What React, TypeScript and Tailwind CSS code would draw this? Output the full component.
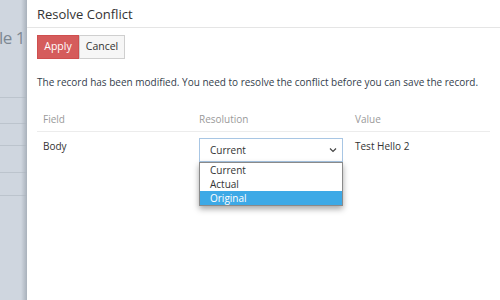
const options = ['Current', 'Actual', 'Original'];

function Backdrop() {
  return (
    <div className="relative w-[27px] shrink-0 overflow-hidden bg-[#cfd6df] font-['Open_Sans',sans-serif]">
      <div className="flex h-[97px] justify-end pt-[24px] pr-[2px]">
        <span className="whitespace-nowrap text-[17px] leading-[28px] tracking-[-0.5px] text-[#7d8893]">le 1</span>
      </div>
      <div className="h-[26px] border-t border-[#bcc4cd]"></div>
      <div className="h-[22px] border-t border-[#bcc4cd]"></div>
      <div className="h-[27px] border-t border-[#bcc4cd]"></div>
      <div className="h-[23px] border-t border-[#bcc4cd]"></div>
      <div className="border-t border-[#bcc4cd]"></div>
      <div className="absolute inset-y-0 right-0 w-[6px] bg-gradient-to-r from-transparent to-[#a9b1bb]"></div>
    </div>
  );
}

export default function App() {
  return (
    <div className="flex h-[300px] w-[500px] overflow-hidden bg-white">
      <Backdrop />
      <div className="flex-1 bg-white font-['Open_Sans',sans-serif] text-[#333]">
        <div className="h-[28px] border-b border-[#e5e5e5] pl-[10px] pt-[4px]">
          <h1 className="text-[13px] leading-[20px] text-[#333]">Resolve Conflict</h1>
        </div>
        <div className="px-[10px]">
          <div className="mt-[7px] flex">
            <button className="h-[24px] w-[42px] border border-[#cf4f4f] bg-[#d55c5c] text-[10.5px] text-white">Apply</button>
            <button className="h-[24px] w-[46px] border border-[#cfcfcf] bg-[#f6f6f6] text-[10.5px] text-[#333]">Cancel</button>
          </div>
          <p className="mt-[16px] whitespace-nowrap text-[10px] leading-[14px] text-[#34404c]">
            The record has been modified. You need to resolve the conflict before you can save the record.
          </p>
          <div className="mt-[23px] grid grid-cols-[156px_156px_1fr] border-b border-[#ececec] pb-[5px] pl-[6px] text-[10px] leading-[14px] text-[#9a9a9a]">
            <span>Field</span>
            <span>Resolution</span>
            <span>Value</span>
          </div>
          <div className="grid grid-cols-[156px_156px_1fr] pl-[6px] pt-[6px] text-[10px] leading-[14px]">
            <span className="pt-[1px] text-[#333]">Body</span>
            <div className="relative w-[144px]">
              <div className="flex h-[24px] items-center justify-between border border-[#a8c6e4] bg-white pl-[10px] pr-[5px] text-[#333]">
                <span>Current</span>
                <svg width="8" height="6" viewBox="0 0 8 6" className="text-[#444]">
                  <path d="M1 1.5 L4 4.5 L7 1.5" fill="none" stroke="currentColor" strokeWidth="1.2" />
                </svg>
              </div>
              <ul className="absolute left-0 right-0 top-[24px] border border-[#8a8a8a] bg-white shadow-[0_3px_6px_rgba(0,0,0,0.35)]">
                {options.map((o) => (
                  <li
                    key={o}
                    className={o === 'Original' ? 'h-[14px] bg-[#3da9e6] pl-[10px] leading-[14px] text-white' : 'h-[14px] pl-[10px] leading-[14px] text-[#333]'}
                  >
                    {o}
                  </li>
                ))}
              </ul>
            </div>
            <span className="pt-[1px] text-[#333]">Test Hello 2</span>
          </div>
        </div>
      </div>
    </div>
  );
}
